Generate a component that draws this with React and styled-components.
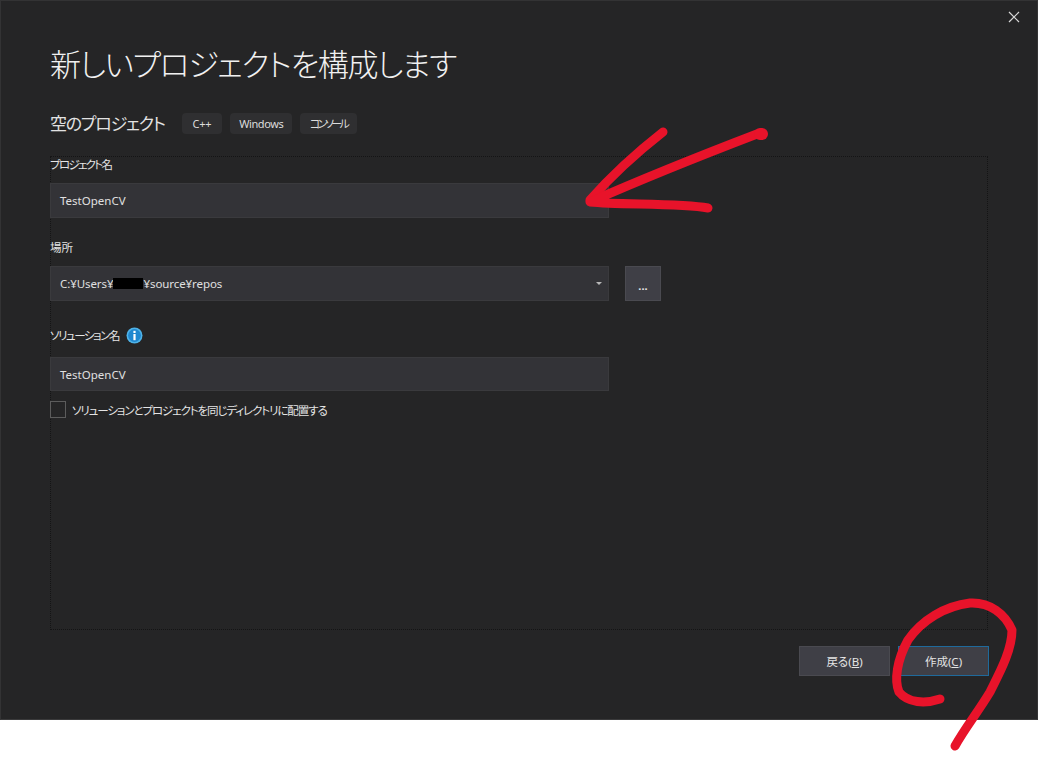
import React from "react";
import styled, { createGlobalStyle } from "styled-components";

const Global = createGlobalStyle`
  html, body { margin: 0; padding: 0; background: #fff; }
  #root { width: 1038px; height: 761px; position: relative; overflow: hidden; }
`;

const FONT = `"Noto Sans", "Noto Sans CJK JP", sans-serif`;

const Dialog = styled.div`
  position: relative;
  box-sizing: border-box;
  width: 1038px;
  height: 720px;
  background: #252526;
  border: 1px solid #333334;
  border-bottom-color: #3a3a3b;
  padding: 0 49px;
  display: flex;
  flex-direction: column;
  font-family: ${FONT};
  color: #e4e4e4;
`;

const Close = styled.button`
  position: absolute;
  top: 10px;
  right: 17px;
  width: 12px;
  height: 12px;
  padding: 0;
  border: 0;
  background: none;
  color: #d8d8d8;
  display: flex;
`;

const Title = styled.h1`
  margin: 40px 0 0;
  height: 46px;
  line-height: 46px;
  font-size: 31px;
  font-weight: 300;
  color: #f1f1f1;
  font-feature-settings: "palt";
  letter-spacing: -1.35px;
  white-space: nowrap;
`;

const Subtitle = styled.div`
  margin-top: 22px;
  height: 28px;
  display: flex;
  align-items: center;
  gap: 8px;
`;

const SubName = styled.span`
  font-size: 17px;
  font-weight: 400;
  font-feature-settings: "palt";
  letter-spacing: -1.25px;
  margin-top: -2px;
  margin-right: 9px;
  color: #e2e2e2;
  white-space: nowrap;
`;

const Tag = styled.span`
  height: 21px;
  padding: 0 ${(p) => p.$pad}px;
  background: #2f2f31;
  border-radius: 4px;
  font-size: 11px;
  line-height: 21px;
  color: #dcdcdc;
  white-space: nowrap;
  font-feature-settings: "palt";
  letter-spacing: ${(p) => p.$sp}px;
`;

const Form = styled.div`
  box-sizing: border-box;
  margin-top: 19px;
  width: 938px;
  height: 474px;
  border: 1px dotted #141415;
  display: flex;
  flex-direction: column;
`;

const Label = styled.div`
  height: 18px;
  margin-top: ${(p) => p.$top}px;
  display: flex;
  align-items: center;
  gap: 7px;
  font-size: 11.5px;
  color: #e4e4e4;
  font-feature-settings: "palt";
  letter-spacing: ${(p) => p.$sp}px;
  margin-left: -1px;
`;

const Row = styled.div`
  margin-top: ${(p) => p.$top}px;
  display: flex;
  gap: 16px;
  margin-left: -1px;
`;

const Field = styled.div`
  box-sizing: border-box;
  width: 559px;
  height: ${(p) => p.$h}px;
  background: #333337;
  border: 1px solid #3a3a3d;
  padding: 0 9px;
  display: flex;
  align-items: center;
  justify-content: space-between;
  font-size: 11.5px;
  color: #e0e0e0;
  white-space: nowrap;
`;

const Path = styled.span`
  display: flex;
  align-items: center;
  letter-spacing: -0.08px;
`;

const Redacted = styled.span`
  display: inline-block;
  width: 30px;
  height: 11px;
  background: #000;
`;

const Caret = styled.span`
  width: 0;
  height: 0;
  border-left: 3px solid transparent;
  border-right: 3px solid transparent;
  border-top: 3px solid #b8b8b8;
  margin-right: -3px;
`;

const Browse = styled.button`
  box-sizing: border-box;
  width: 36px;
  height: 35px;
  padding: 4px 0 0;
  background: #3f3f46;
  border: 1px solid #4a4a50;
  color: #e8e8e8;
  font-family: ${FONT};
  font-size: 11px;
  font-weight: 700;
`;

const CheckRow = styled.div`
  margin-top: 10px;
  margin-left: -1px;
  display: flex;
  align-items: center;
  gap: 6px;
  font-size: 11.5px;
  color: #e4e4e4;
  font-feature-settings: "palt";
  letter-spacing: -1.1px;
`;

const Box = styled.span`
  box-sizing: border-box;
  width: 16px;
  height: 17px;
  border: 1px solid #5c5c5c;
`;

const Footer = styled.div`
  margin-top: 16px;
  width: 939px;
  display: flex;
  justify-content: flex-end;
  gap: 8px;
`;

const Button = styled.button`
  box-sizing: border-box;
  width: 91px;
  height: 30px;
  background: #3f3f46;
  border: 1px solid ${(p) => (p.$primary ? "#1f6a9c" : "#4a4a50")};
  color: #e4e4e4;
  font-family: ${FONT};
  font-size: 11.5px;
  padding: 0;
  font-feature-settings: "palt";
  u { text-underline-offset: 1px; }
`;

const Ink = styled.svg`
  position: absolute;
  left: 0;
  top: 0;
  pointer-events: none;
`;

export default function App() {
  return (
    <>
      <Global />
      <Dialog>
        <Close aria-label="閉じる">
          <svg width="12" height="12" viewBox="0 0 12 12" fill="none" stroke="currentColor" strokeWidth="1.2">
            <path d="M1 1l10 10M11 1L1 11" />
          </svg>
        </Close>
        <Title>新しいプロジェクトを構成します</Title>
        <Subtitle>
          <SubName>空のプロジェクト</SubName>
          <Tag $pad={11} $sp={-0.3}>C++</Tag>
          <Tag $pad={9} $sp={-0.4}>Windows</Tag>
          <Tag $pad={9.5} $sp={-2.6}>コンソール</Tag>
        </Subtitle>
        <Form>
          <Label $top={-2} $sp={-1.7}>プロジェクト名</Label>
          <Row $top={10}>
            <Field $h={35}>TestOpenCV</Field>
          </Row>
          <Label $top={20} $sp={0}>場所</Label>
          <Row $top={10}>
            <Field $h={35}>
              <Path>
                C:¥Users¥<Redacted />¥source¥repos
              </Path>
              <Caret />
            </Field>
            <Browse>...</Browse>
          </Row>
          <Label $top={25} $sp={-1.45}>
            ソリューション名
            <svg width="17" height="17" viewBox="0 0 17 17">
              <circle cx="8.5" cy="8.5" r="8" fill="#4fb3e8" />
              <circle cx="8.5" cy="8.5" r="6.4" fill="#1f87cf" />
              <rect x="7.4" y="7" width="2.2" height="6.2" fill="#fff" />
              <rect x="7.4" y="3.8" width="2.2" height="2.2" fill="#fff" />
            </svg>
          </Label>
          <Row $top={13}>
            <Field $h={34}>TestOpenCV</Field>
          </Row>
          <CheckRow>
            <Box />
            ソリューションとプロジェクトを同じディレクトリに配置する
          </CheckRow>
        </Form>
        <Footer>
          <Button>
            戻る(<u>B</u>)
          </Button>
          <Button $primary>
            作成(<u>C</u>)
          </Button>
        </Footer>
      </Dialog>
      <Ink width="1038" height="761" viewBox="0 0 1038 761" fill="none" stroke="#e8132a" strokeLinecap="round" strokeLinejoin="round">
        <path strokeWidth="9" d="M663 132C640 150 612 175 590 200" />
        <path strokeWidth="9" d="M757 134C710 152 640 180 590 202C620 205 680 203 708 208" />
        <path strokeWidth="12" d="M760 134l2 0" />
        <path strokeWidth="9" d="M940 699C925 704 908 703 899 692C894 680 897 660 908 640C922 620 945 606 970 603C990 602 1005 614 1012 630C1012 650 1000 672 990 692C978 712 965 728 955 746" />
      </Ink>
    </>
  );
}
